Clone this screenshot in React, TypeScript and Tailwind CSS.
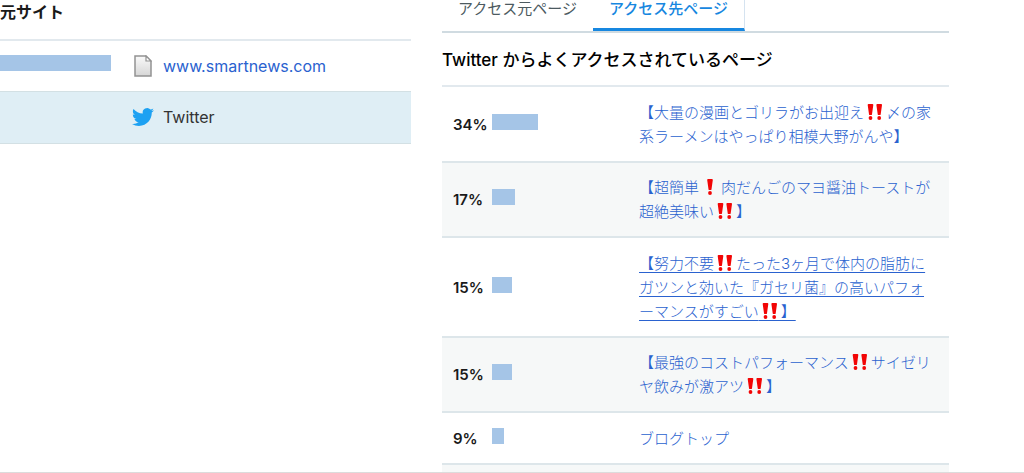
interface PageRow {
  percent: number;
  title: string;
  active?: boolean;
}

const pages: PageRow[] = [
  { percent: 34, title: "【大量の漫画とゴリラがお出迎え‼〆の家系ラーメンはやっぱり相模大野がんや】" },
  { percent: 17, title: "【超簡単❗肉だんごのマヨ醤油トーストが超絶美味い‼】" },
  {
    percent: 15,
    title: "【努力不要‼たった3ヶ月で体内の脂肪にガツンと効いた『ガセリ菌』の高いパフォーマンスがすごい‼】",
    active: true,
  },
  { percent: 15, title: "【最強のコストパフォーマンス‼サイゼリヤ飲みが激アツ‼】" },
  { percent: 9, title: "ブログトップ" },
];

function FileIcon() {
  return (
    <svg width="18" height="22" viewBox="0 0 18 22" aria-hidden="true">
      <defs>
        <linearGradient id="sheet" x1="0" y1="0" x2="0" y2="1">
          <stop offset="0" stopColor="#fafafa" />
          <stop offset="1" stopColor="#d6d6d6" />
        </linearGradient>
      </defs>
      <path d="M1 1h11l5 5v15H1z" fill="url(#sheet)" stroke="#929292" strokeWidth="1.5" />
      <path d="M12 1v5h5z" fill="#fff" stroke="#929292" strokeWidth="1.2" />
    </svg>
  );
}

function TwitterIcon() {
  return (
    <svg width="22" height="22" viewBox="0 0 24 24" fill="#1da1f2" aria-hidden="true">
      <path d="M23.95 4.57a10 10 0 0 1-2.82.77 4.96 4.96 0 0 0 2.16-2.72c-.95.55-2 .95-3.13 1.18a4.92 4.92 0 0 0-8.38 4.48C7.69 8.1 4.07 6.13 1.64 3.16a4.82 4.82 0 0 0-.67 2.48c0 1.71.87 3.21 2.19 4.1a4.9 4.9 0 0 1-2.23-.62v.06a4.92 4.92 0 0 0 3.95 4.83 5 5 0 0 1-2.21.08 4.94 4.94 0 0 0 4.6 3.42A9.87 9.87 0 0 1 0 19.54a13.99 13.99 0 0 0 7.56 2.21c9.05 0 14-7.5 14-13.98 0-.21 0-.42-.02-.63a9.94 9.94 0 0 0 2.46-2.55z" />
    </svg>
  );
}

// Red exclamation emoji, one or two marks wide. Underlines skip inline svg, so it draws its own.
function EmojiMark({ double, underlined }: { double: boolean; underlined?: boolean }) {
  return (
    <svg
      role="img"
      aria-label={double ? "‼" : "❗"}
      className="inline h-[18px] w-[22px] align-[-4px]"
      viewBox="0 0 22 18"
      fill="#f20505"
    >
      {underlined && <path d="M0 17h22v1H0z" fill="#2a62cf" />}
      {(double ? [6.5, 15.2] : [11]).map((x) => (
        <g key={x} transform={`translate(${x} 0)`}>
          <path d="M-1.9 0h3.8q1 0 .9 1L1.5 10.2q-.1.9-.8.9h-1.4q-.7 0-.8-.9L-2.8 1q-.1-1 .9-1z" />
          <circle cy="14" r="1.9" />
        </g>
      ))}
    </svg>
  );
}

function Title({ text, underlined }: { text: string; underlined?: boolean }) {
  return (
    <>
      {text
        .split(/([‼❗])/)
        .map((part, i) =>
          part === "‼" || part === "❗" ? (
            <EmojiMark key={i} double={part === "‼"} underlined={underlined} />
          ) : (
            part
          ),
        )}
    </>
  );
}

function SourceTable() {
  return (
    <section>
      <h2 className="border-b-2 border-[#e2e9ee] pb-[15px] text-base leading-6 font-semibold">元サイト</h2>
      <table className="w-full table-fixed border-collapse text-base leading-6">
        <tbody>
          <tr className="h-[50px]">
            <td className="w-[132px] pb-1.5 align-middle">
              <div className="h-4 w-[111px] bg-[#a5c5e7]" />
            </td>
            <td>
              <div className="flex items-center gap-[9px]">
                <span className="flex w-[22px] justify-center">
                  <FileIcon />
                </span>
                <a href="#" className="text-[#2a62cf]">
                  www.smartnews.com
                </a>
              </div>
            </td>
          </tr>
          <tr className="h-[52px] border-y border-[#d3e0e4] bg-[#dfeef5]">
            <td />
            <td>
              <div className="flex items-center gap-[9px]">
                <TwitterIcon />
                <span className="text-[#333]">Twitter</span>
              </div>
            </td>
          </tr>
        </tbody>
      </table>
    </section>
  );
}

function PageTable() {
  return (
    <section>
      <div role="tablist" className="flex border-b-2 border-[#d0dbe1] text-[15px] leading-[18px]">
        <button role="tab" aria-selected="false" className="border-b-3 border-transparent px-4 pb-[10px] text-[#4c5a5f]">
          アクセス元ページ
        </button>
        <button
          role="tab"
          aria-selected="true"
          className="border-r border-b-3 border-r-[#d5e3f0] border-b-[#1787e0] px-4 pb-[10px] font-medium text-[#1787e0]"
        >
          アクセス先ページ
        </button>
      </div>
      <h2 className="border-b-2 border-[#e2e9ee] pt-[15px] pb-[13px] text-[17px] leading-6 font-medium text-black">
        Twitter からよくアクセスされているページ
      </h2>
      <table className="w-full table-fixed border-separate border-spacing-0 text-[15px] leading-6">
        <tbody>
          {pages.map((page, i) => (
            <tr
              key={i}
              className="even:bg-[#f6f8f8] [&>td]:border-b-2 [&>td]:border-[#dde6ea] [&>td]:pt-[14px] [&>td]:pb-3 even:[&>td]:pt-[13px]"
            >
              <td className="w-[50px] pl-[11px] font-semibold text-[#1a1a1a]">{page.percent}%</td>
              <td className="w-[147px] pr-[11px]">
                <div className="-mt-1.5 h-4 bg-[#a5c5e7]" style={{ width: `${page.percent}%` }} />
              </td>
              <td className="pr-3 [line-break:anywhere]">
                <a
                  href="#"
                  className={`font-light text-[#2a62cf] ${page.active ? "underline underline-offset-3" : ""}`}
                >
                  <Title text={page.title} underlined={page.active} />
                </a>
              </td>
            </tr>
          ))}
          <tr className="h-[7px] bg-[#f6f8f8]">
            <td colSpan={3} />
          </tr>
        </tbody>
      </table>
    </section>
  );
}

export default function App() {
  return (
    <main
      lang="ja"
      className="grid grid-cols-[411fr_507fr] gap-[31px] border-b border-[#dcdcdc] bg-white pr-[75px] font-[Inter,'Noto_Sans_CJK_JP',sans-serif] text-[#1a1a1a]"
    >
      <SourceTable />
      <PageTable />
    </main>
  );
}
